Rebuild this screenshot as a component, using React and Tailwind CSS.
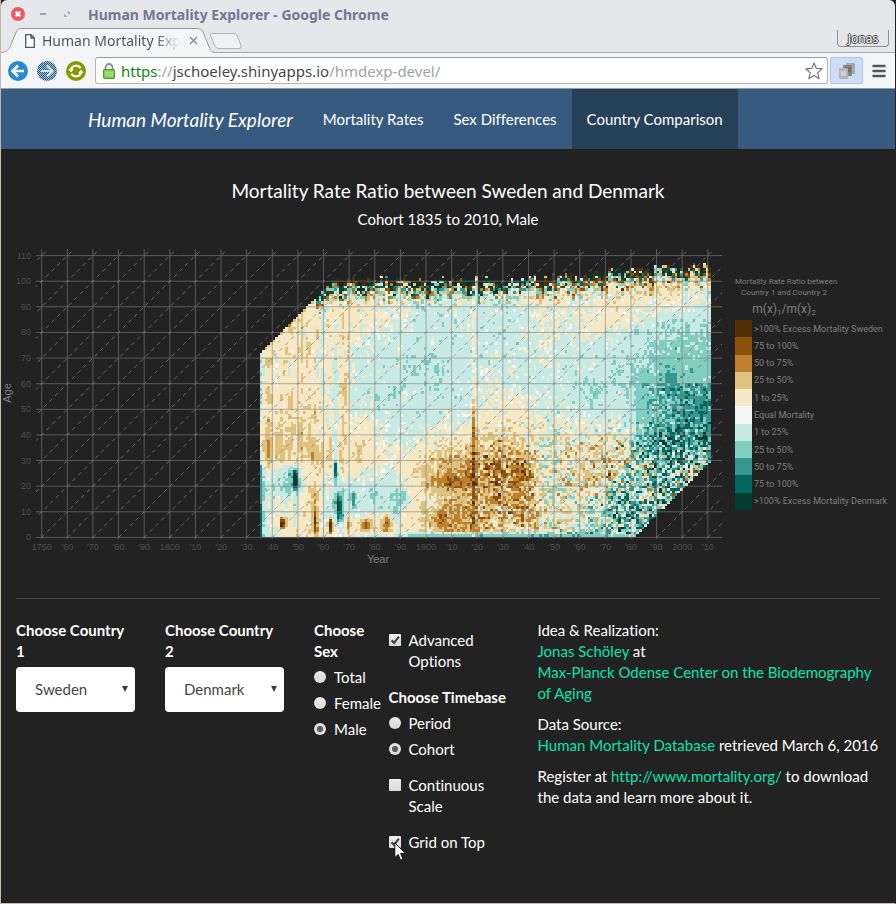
import React from "react";

/* ---------- Mortality ratio surface ---------- */

const CLASS_COLORS = {
  "5": "#543005",
  "4": "#8c510a",
  "3": "#bf812d",
  "2": "#dfc27d",
  "1": "#f6e8c3",
  "0": "#f5f5f5",
  "-1": "#c7eae5",
  "-2": "#80cdc1",
  "-3": "#35978f",
  "-4": "#01665e",
  "-5": "#003c30",
};

// Mean ratio class per decade (columns: 1835, 1845 ... 2005) at each age.
const SURFACE = [
  { age: 0, v: [-1, 0.4, 0.8, 0.2, -0.3, -0.2, -1.2, -1.5, -1.5, -1.5, -1.5, -2.1, -1.7, -1.7, -1.2, -1, -1, -1] },
  { age: 2, v: [-0.6, 0.3, 0.8, 0.4, 0.7, 0.6, 0.3, 1.2, 1.5, 0.6, 0.7, 0.3, 0, -0.6, -1.2, -1, -1, -1] },
  { age: 5, v: [-0.4, 0.5, 0.8, 0.3, 0.8, 0.7, 0.4, 1.9, 2.2, 1.3, 1.3, 0.6, 0.4, -0.6, -1.3, -1.5, -1.5, -1.5] },
  { age: 10, v: [-0.4, 0.3, 0.7, -0.6, -0.5, -0.6, 0.6, 1.7, 2, 1.7, 1.8, 0.8, 1, -0.9, -2, -1.6, -1, -1] },
  { age: 15, v: [-0.3, -0.2, 0.6, -0.5, -0.5, -0.7, 0.3, 1.3, 1.6, 2, 1.9, 0.6, 0.6, 0.2, -1.4, -0.4, -1.8, -1] },
  { age: 20, v: [-0.4, -0.7, 0.5, -0.3, -0.4, -0.5, 0.3, 2, 2.2, 2.2, 2.4, 0.5, 0.6, 0.7, -0.6, -1.6, -2, -1] },
  { age: 25, v: [0.2, -0.3, 0.6, 0.3, 0.2, -0.2, 0.5, 1.9, 2.2, 2.3, 2, 0.5, 0.5, 0.9, 0.3, -1.4, -1.9, -0.5] },
  { age: 30, v: [0.6, 0.7, 0.9, 0.5, 0.6, 0.3, 0.4, 1.6, 1.7, 2.1, 1.9, 0.5, 0.5, 0.9, 0.6, -1.3, -2.1, -1.4] },
  { age: 35, v: [0.5, 0.8, 0.9, 0.5, 0.5, -0.1, 0, 0.6, 0.8, 1.6, 1.2, 0.3, 0.4, 0.8, 0.4, -1.3, -2.1, -2.2] },
  { age: 40, v: [0.5, 0.7, 0.8, 0.3, 0.4, -0.1, -0.2, 0.2, 0.4, 0.9, 0.7, 0.2, 0.2, 0.1, -0.1, -1.2, -2.2, -2.6] },
  { age: 50, v: [0.4, 0.6, 0.7, 0, -0.3, -0.5, -0.5, -0.45, -0.4, 0.1, 0.3, -0.3, -0.3, -0.5, -0.4, -1.2, -1.8, -2.4] },
  { age: 60, v: [0.3, 0.5, 0.6, 0, -0.5, -0.6, -0.55, -0.6, -0.5, -0.2, -0.4, -0.3, -0.5, -0.7, -0.7, -1.3, -1.7, -1.5] },
  { age: 70, v: [0.4, 0.5, 0.5, 0, -0.4, -0.5, -0.6, -0.6, -0.5, -0.4, -0.4, -0.1, -0.4, -0.5, -0.6, -1, -1.6, -1.5] },
  { age: 78, v: [0.4, 0.5, 0.5, 0.3, 0, -0.2, -0.5, -0.55, -0.4, -0.5, -0.4, 0, -0.2, 0, -0.5, -0.7, -1.1, -1.2] },
  { age: 85, v: [0.5, 0.6, 0.5, 0.3, 0.3, 0.2, -0.3, -0.5, -0.3, -0.5, -0.4, 0.1, -0.1, 0.4, 0.5, -0.2, -0.6, -0.6] },
  { age: 92, v: [0.5, 0.5, 0.2, 0.4, 0.3, 0.2, -0.2, -0.3, -0.2, -0.2, -0.2, 0.3, 0.1, 0.1, 0.6, 0.5, 0.4, 0] },
  { age: 110, v: [1, 1, 0.5, 0.5, 0.6, 0.4, 0.2, 0, 0.2, 0, 0, 0.4, 0.3, 0.4, 0.8, 0.7, 0.6, 0.7] },
];

function hash(a, b, c) {
  let h = Math.imul(a + 7919, 0x9e3779b1);
  h ^= h >>> 15;
  h = Math.imul(h + b + 104729, 0x85ebca6b);
  h ^= h >>> 13;
  h = Math.imul(h + c + 1299709, 0xc2b2ae35);
  h ^= h >>> 16;
  h = Math.imul(h, 0x27d4eb2f);
  h ^= h >>> 15;
  return (h >>> 0) / 4294967296;
}

const gauss = (a, b, c) => hash(a, b, c) + hash(a, b, c + 11) + hash(a, b, c + 23) - 1.5;
const clamp = (v, lo, hi) => Math.min(hi, Math.max(lo, v));

function streak(year, age, length, seed) {
  const p = age / length;
  const i = Math.floor(p);
  const t = p - i;
  return gauss(year, i, seed) * (1 - t) + gauss(year, i + 1, seed) * t;
}

function meanClass(year, age) {
  let r = 0;
  while (r < SURFACE.length - 2 && SURFACE[r + 1].age <= age) r += 1;
  const lo = SURFACE[r];
  const hi = SURFACE[r + 1];
  const ta = clamp((age - lo.age) / (hi.age - lo.age), 0, 1);
  const p = clamp((year - 1835) / 10, 0, 17);
  const c = Math.min(16, Math.floor(p));
  const tc = p - c;
  const at = (row) => row.v[c] * (1 - tc) + row.v[c + 1] * tc;
  return at(lo) * (1 - ta) + at(hi) * ta;
}

// Local events: [year, age, half width, half height, strength]
const SPOTS = [
  [1838, 43, 0.8, 3, 1.6], [1838, 32, 0.8, 5, 2], [1838, 55, 1.2, 3, 1],
  [1838, 67, 0.8, 2, 0.9], [1842, 34, 2, 5, 0.6], [1835, 60, 0.6, 12, -0.9],
  [1848.5, 22, 1, 3.4, -4.6], [1848.5, 11, 0.8, 4, -1.4], [1843.5, 5, 0.9, 1.8, 4.6],
  [1847, 22, 4, 5, -0.6], [1835.5, 15, 0.8, 12, -1],
  [1851, 36, 0.7, 7, 0.9], [1851, 70, 0.5, 18, 0.9], [1847, 54, 0.7, 3, 0.9],
  [1847, 40, 0.7, 5, 0.7], [1856, 45, 0.6, 4, 0.7],
  [1846, 83, 0.6, 3, 0.9], [1855, 34, 2, 4, 0.7], [1856, 10, 0.9, 9, 1.8],
  [1856, 5, 0.6, 4, 1.8], [1862, 4, 0.7, 2.6, 4], [1864, 26, 0.8, 2.6, -3],
  [1864, 40, 1, 24, -0.8], [1865.5, 11, 1.2, 5, -2.6], [1866, 8, 2, 7, -0.8],
  [1860, 10, 0.6, 10, -0.9], [1859, 70, 1.1, 22, -0.6],
  [1871, 14, 0.9, 3, -1.5], [1876, 4, 1.8, 2, 2], [1884, 5, 1.2, 3.4, 2.2],
  [1888, 12, 1.2, 6, -1.2], [1891, 15, 1.2, 2.4, -1.5], [1869, 4, 0.6, 3, 1.7],
  [1867, 83, 0.8, 6, 1], [1868, 66, 1.4, 12, 0.9], [1867, 45, 1.3, 16, 0.8],
  [1873, 33, 1.2, 4, 0.9], [1879, 15, 0.7, 2, -1.2],
  [1918, 24, 0.5, 24, 2.2], [1918, 70, 0.9, 28, 0.6], [1905, 21, 5, 2, 0.7],
  [1904, 6, 3, 3, 0.8], [1912, 21, 4, 2.4, 0.7], [1995, 60, 2, 4, -0.8],
  [1938, 23, 2, 4, 0.7], [1927, 28, 4, 3, 0.8], [1902, 12, 1.5, 4, -0.6],
  [1904, 65, 2, 2, -0.6], [1965, 57, 2, 4, -0.4], [1969, 38, 2, 2, 0.8],
];

function topAge(year) {
  if (year < 1863) return year - 1835 + 72;
  const trend = year < 1930 ? 99.5 : 99.5 + (year - 1930) * 0.074;
  return Math.round(trend + (hash(year, 3, 7) - 0.4) * 4);
}

function cellClass(year, age, top) {
  let v = meanClass(year, age);
  for (const [y0, a0, w, h, s] of SPOTS) {
    const dx = (year - y0) / w;
    const dy = (age - a0) / h;
    if (Math.abs(dx) < 3 && Math.abs(dy) < 2) v += s * Math.exp(-0.7 * dx * dx - 0.5 * dy * dy * dy * dy);
  }
  if (year > 1943 && year < 1952 && age < 38 && age > 3) v -= 0.4;
  if (year > 1933 && year <= 1943 && age < 35 && age > 3) v += 0.3;
  if (year > 1981 && age < 60 && age > 28) v -= 0.35;
  const cohort = year - age;
  if (age > 48 && age < 72 && year > 1877 && year < 1906 && cohort > 1828 && cohort < 1834) v -= 0.32;

  const late = clamp((year - 1912) / 10, 0, 1);
  const modern = clamp((year - 1962) / 15, 0, 1);
  const young = clamp((46 - age) / 16, 0, 1);
  const turn = clamp((year - 1893) / 10, 0, 1);
  let fine = 0.3 + 0.45 * young * turn + 0.85 * late * young + 0.9 * modern * young;
  if (year > 1985 && age < 60) fine += 0.6;
  if (year > 1920 && age >= 35) fine += 0.1;
  v += gauss(year, age, 5) * (age === 0 ? 0.4 : fine * 1.25);
  const smooth = year < 1871 ? 0.65 : 0.32;
  v += streak(year, age, year < 1900 ? 6 : 3, 131) * smooth;
  v += streak(year, age + 40, 2, 277) * 0.3;
  if (year === 1835 && age < 28) v = age < 14 ? -3.9 + age * 0.07 : -2.1;

  const fromTop = top - age;
  if (year > 1856 && age > 86) {
    const edge = Math.exp(-fromTop / 3);
    v += gauss(year, age, 491) * 24 * edge;
    if (fromTop < 4 && year < 1940) v -= 2.4;
    if (fromTop < 8 && year > 1940) v += 0.5;
  } else if (year <= 1856 && fromTop < 2) {
    v += 0.5;
  }
  if (Math.abs(v) < 0.04) return 0;
  return clamp(v > 0 ? Math.ceil(v) : Math.floor(v), -5, 5);
}

const X0 = 41.7;
const Y0 = 537;
const STEP = 2.562;

function buildCells() {
  const paths = {};
  for (let year = 1835; year <= 2010; year += 1) {
    const top = topAge(year);
    const bottom = Math.max(0, year - 1981);
    const x = Math.round((X0 + (year - 1750) * STEP) * 100) / 100 + 0.3;
    let start = bottom;
    let current = cellClass(year, bottom, top);
    for (let age = bottom + 1; age <= top; age += 1) {
      const next = age === top ? null : cellClass(year, age, top);
      if (next !== current) {
        const y1 = (Y0 - start * STEP).toFixed(2);
        const h = ((age - start) * STEP).toFixed(2);
        paths[current] = (paths[current] || "") + `M${x.toFixed(2)} ${y1}v-${h}h${STEP}v${h}z`;
        current = next;
        start = age;
      }
    }
  }
  return paths;
}

const CELLS = buildCells();
const DECADES = Array.from({ length: 27 }, (_, i) => 1750 + i * 10);
const AGES = Array.from({ length: 12 }, (_, i) => i * 10);
const DIAGONALS = Array.from({ length: 38 }, (_, i) => 1640 + i * 10);

function Surface() {
  const px = (year) => X0 + (year - 1750) * STEP;
  const py = (age) => 537.4 - age * STEP;
  return (
    <svg
      viewBox="1 240 730 330"
      className="block min-w-0 flex-1 font-['Liberation_Sans',Arial,sans-serif]"
      role="img"
      aria-label="Mortality rate ratio by year and age"
    >
      <defs>
        <clipPath id="panel">
          <rect x="36" y="249" width="686" height="290" />
        </clipPath>
      </defs>
      <g shapeRendering="crispEdges">
        {Object.keys(CELLS).map((k) => (
          <path key={k} d={CELLS[k]} fill={CLASS_COLORS[k]} />
        ))}
      </g>
      <g stroke="#7f7f7f" strokeOpacity="0.6" fill="none">
        {AGES.map((a) => (
          <path key={a} d={`M36 ${py(a)}H722`} />
        ))}
        {DECADES.map((d) => (
          <path key={d} d={`M${px(d)} 249V539`} />
        ))}
        <g clipPath="url(#panel)" strokeDasharray="4 4" strokeWidth="1" strokeOpacity="0.75">
          {DIAGONALS.map((d) => (
            <path key={d} d={`M${px(d)} ${py(0)}L${px(d + 120)} ${py(120)}`} />
          ))}
        </g>
      </g>
      <g fill="#4f4f4f" fontSize="9" textAnchor="end">
        {AGES.map((a) => (
          <text key={a} x="31" y={py(a) + 3}>{a}</text>
        ))}
      </g>
      <g fill="#4f4f4f" fontSize="9" textAnchor="middle">
        {DECADES.map((d) => (
          <text key={d} x={px(d)} y="550">
            {d === 1750 || d % 100 === 0 ? d : `'${d % 100}`}
          </text>
        ))}
      </g>
      <g fill="#7f7f7f" fontSize="11" textAnchor="middle">
        <text x="378" y="563">Year</text>
        <text transform="translate(11 393) rotate(-90)">Age</text>
      </g>
    </svg>
  );
}

const LEGEND = [
  [">100% Excess Mortality Sweden", "bg-[#543005]"],
  ["75 to 100%", "bg-[#8c510a]"],
  ["50 to 75%", "bg-[#bf812d]"],
  ["25 to 50%", "bg-[#dfc27d]"],
  ["1 to 25%", "bg-[#f6e8c3]"],
  ["Equal Mortality", "bg-[#f5f5f5]"],
  ["1 to 25%", "bg-[#c7eae5]"],
  ["25 to 50%", "bg-[#80cdc1]"],
  ["50 to 75%", "bg-[#35978f]"],
  ["75 to 100%", "bg-[#01665e]"],
  [">100% Excess Mortality Denmark", "bg-[#003c30]"],
];

function Legend() {
  return (
    <aside className="w-[164px] shrink-0 pl-1 pt-[36px] font-[Roboto,Arial,sans-serif] text-[#7f7f7f]">
      <div className="w-[98px] text-center">
        <p className="whitespace-nowrap text-[8px] leading-[11px]">
          Mortality Rate Ratio between
          <br />
          Country 1 and Country 2
        </p>
        <p className="py-[3px] text-[12px] leading-4">
          m(x)<sub className="text-[8px]">1</sub>/m(x)<sub className="text-[8px]">2</sub>
        </p>
      </div>
      <ul className="grid h-[190px] grid-rows-11">
        {LEGEND.map(([label, color], i) => (
          <li key={i} className="flex items-stretch gap-[2px]">
            <span className={`w-[17px] shrink-0 ${color}`} />
            <span className="self-center whitespace-nowrap text-[9px] leading-3">{label}</span>
          </li>
        ))}
      </ul>
    </aside>
  );
}

/* ---------- Browser window ---------- */

function TitleBar() {
  return (
    <div className="flex h-7 items-center pl-[10px]">
      <button aria-label="Close" className="mr-[15px]">
        <svg width="14" height="14" viewBox="0 0 14 14" className="block">
          <circle cx="7" cy="7" r="7" fill="#f0595f" />
          <path d="M4.6 4.6l4.8 4.8M9.4 4.6l-4.8 4.8" stroke="#fff" strokeWidth="2.2" />
        </svg>
      </button>
      <button aria-label="Minimize" className="mr-[16px]">
        <svg width="7" height="8" viewBox="0 0 7 8" className="block">
          <path d="M0 4h6" stroke="#8e92a3" strokeWidth="1.6" />
        </svg>
      </button>
      <button aria-label="Maximize" className="mr-[17px]">
        <svg width="8" height="8" viewBox="0 0 8 8" className="block">
          <path d="M3.500 1.500H7V5zM1 3.500V7h3.500z" fill="#a6a9b6" />
        </svg>
      </button>
      <h1 className="whitespace-nowrap text-[14px] font-bold text-[#73788f]">
        Human Mortality Explorer - Google Chrome
      </h1>
    </div>
  );
}

function TabStrip() {
  return (
    <div className="flex h-[25px] border-b border-[#a5a6ab]">
      <div className="relative h-[25px] w-[214px] shrink-0">
        <svg className="absolute inset-0" width="214" height="25" viewBox="0 0 214 25">
          <path
            d="M0 24.5C5 24 7 23 9 19L15 4.500C16.500 1 18 .5 21 .5H195C199 .5 201 1.500 202.500 5L208 19C210 23 211 24.500 214 24.500V26H0z"
            fill="#f4f5f7"
            stroke="#98999e"
          />
        </svg>
        <div className="relative flex h-full items-center pl-6">
          <svg width="10" height="14" viewBox="0 0 10 14" className="mr-[7px] shrink-0">
            <path d="M.7.7H6L9.300 4V13.300H.7zM6 .7V4H9.300" fill="#fff" stroke="#55565a" strokeWidth="1.300" />
          </svg>
          <span className="w-[138px] overflow-hidden whitespace-nowrap bg-linear-to-r from-[#4e5158] from-82% to-[#4e515800] bg-clip-text text-[14px] leading-5 text-transparent">
            Human Mortality Explorer
          </span>
          <button aria-label="Close tab" className="ml-[9px]">
            <svg width="9" height="9" viewBox="0 0 9 9" className="block">
              <path d="M1 1l7 7M8 1L1 8" stroke="#8f9197" strokeWidth="1.500" />
            </svg>
          </button>
        </div>
      </div>
      <button aria-label="New tab" className="mt-[5px] h-4 w-[34px] shrink-0">
        <svg width="34" height="16" viewBox="0 0 34 16" className="-ml-[6px] block overflow-visible">
          <path d="M3 .5H25Q27.500.5 28.500 3L32 12.500Q33 15.500 30 15.500H10Q7 15.500 6 13L1.500 3Q.8.5 3 .5z" fill="#f0f1f4" stroke="#b2b3b8" />
        </svg>
      </button>
      <button className="ml-auto mr-[6px] mt-[2px] h-[17px] w-[52px] rounded-b-[4px] border border-t-0 border-[#8f9095] text-[12px] leading-[17px] text-white [text-shadow:1px_0_#444,-1px_0_#444,0_1px_#444,0_-1px_#444]">
        Jonas
      </button>
    </div>
  );
}

function Toolbar() {
  return (
    <div className="flex h-9 items-center border-b border-[#9a9ba0] bg-[#f4f5f7] pl-[7px] pr-[9px]">
      <button aria-label="Back" className="mr-[9px]">
        <svg width="20" height="20" viewBox="0 0 20 20" className="block">
          <circle cx="10" cy="10" r="10" fill="#268bd2" />
          <path d="M16 10H5M10 4.500L4.500 10l5.500 5.500" fill="none" stroke="#fff" strokeWidth="2.600" />
        </svg>
      </button>
      <button aria-label="Forward" className="mr-[9px]">
        <svg width="20" height="20" viewBox="0 0 20 20" className="block">
          <defs>
            <pattern id="checker" width="2" height="2" patternUnits="userSpaceOnUse">
              <path d="M0 0h1v1H0zM1 1h1v1H1z" fill="#1f5a8c" shapeRendering="crispEdges" />
            </pattern>
          </defs>
          <circle cx="10" cy="10" r="10" fill="#a9c0d3" />
          <circle cx="10" cy="10" r="10" fill="url(#checker)" />
          <path d="M4 10h11M10 4.500l5.500 5.500-5.500 5.500" fill="none" stroke="#dbe6ef" strokeWidth="2.200" />
        </svg>
      </button>
      <button aria-label="Reload" className="mr-[9px]">
        <svg width="20" height="20" viewBox="0 0 20 20" className="block">
          <circle cx="10" cy="10" r="10" fill="#859900" />
          <path d="M5 8.200A5.400 5.400 0 0 1 14.600 7.200M15 11.800A5.400 5.400 0 0 1 5.400 12.800" fill="none" stroke="#fff" strokeWidth="2.200" />
          <path d="M2.400 8h5.400L5 11.600zM17.600 12h-5.400L15 8.400z" fill="#fff" />
        </svg>
      </button>
      <div className="flex h-[27px] min-w-0 flex-1 items-center rounded-[3px] border border-[#b4b5ba] border-t-[#98999e] bg-white pl-[7px] pr-1">
        <svg width="12" height="16" viewBox="0 0 12 16" className="mr-[6px] shrink-0">
          <path d="M2.500 8V4.500a3.500 3.500 0 0 1 7 0V8" fill="none" stroke="#8a8a8a" strokeWidth="1.800" />
          <rect x=".6" y="6.600" width="10.800" height="8.800" rx="1" fill="#8fd45f" stroke="#4f9a2c" strokeWidth="1.200" />
          <path d="M2 9.500h8M2 12h8" stroke="#a9e380" />
        </svg>
        <span className="whitespace-nowrap text-[15px] leading-6 text-[#a0a2a6]">
          <span className="text-[#0a8a0a]">https</span>://<span className="text-[#45474d]">jschoeley.shinyapps.io</span>/hmdexp-devel/
        </span>
        <button aria-label="Bookmark" className="ml-auto">
          <svg width="18" height="18" viewBox="0 0 18 18" className="block">
            <path d="M9 .9l2.300 5.500 5.900.5-4.500 3.900 1.400 5.900L9 13.600l-5.100 3.100 1.400-5.900L.8 6.900l5.900-.5z" fill="#fff" stroke="#77787c" strokeWidth="1.200" strokeLinejoin="round" />
          </svg>
        </button>
      </div>
      <button aria-label="Extension" className="ml-[2px] flex h-[27px] w-[33px] items-center justify-center rounded-[2px] border border-[#a9c4f5] bg-[#cddcf8]">
        <svg width="18" height="18" viewBox="0 0 18 18">
          <rect x="8" y="1" width="9" height="11" rx="1" fill="#a8a8a8" />
          <rect x="5" y="3" width="9" height="11" rx="1" fill="#858585" />
          <rect x="8" y="5" width="5" height="5" fill="#6f6f6f" />
          <rect x="1" y="6" width="9" height="11" rx="1" fill="#b4b4b4" />
          <rect x="3" y="9" width="5" height="5" fill="#d2d2d2" />
        </svg>
      </button>
      <button aria-label="Menu" className="ml-[9px]">
        <svg width="14" height="14" viewBox="0 0 14 14" className="block">
          <path d="M1.500 2h11M1.500 7h11M1.500 12h11" stroke="#55565a" strokeWidth="2.600" strokeLinecap="round" />
        </svg>
      </button>
    </div>
  );
}

/* ---------- Page ---------- */

function NavLink({ active, children }) {
  return (
    <a
      href="#"
      aria-current={active ? "page" : undefined}
      className={`flex items-center whitespace-nowrap px-[15px] text-[15px] ${active ? "bg-[#28415b]" : ""}`}
    >
      {children}
    </a>
  );
}

function CountrySelect({ id, label, options }) {
  return (
    <div className="col-span-2 px-[15px]">
      <label htmlFor={id} className="mb-[5px] block font-bold">{label}</label>
      <div className="relative">
        <select id={id} className="h-[45px] w-full appearance-none rounded-[4px] bg-white pl-[19px] pr-6 text-[15px] text-[#464545]">
          {options.map((o) => (
            <option key={o}>{o}</option>
          ))}
        </select>
        <svg className="pointer-events-none absolute right-[7px] top-[19px]" width="6" height="6" viewBox="0 0 6 6">
          <path d="M0 0h6L3 6z" fill="#3a3a3a" />
        </svg>
      </div>
    </div>
  );
}

function Radio({ name, label, checked }) {
  return (
    <label className="mt-[5px] flex items-start gap-2">
      <input
        type="radio"
        name={name}
        defaultChecked={checked}
        className="mt-1 size-3 shrink-0 appearance-none rounded-full bg-linear-to-b from-[#ececec] to-[#d8d8d8] checked:bg-radial checked:from-[#5c5c5c] checked:from-32% checked:to-[#e0e0e0] checked:to-42%"
      />
      {label}
    </label>
  );
}

function Check({ label, checked }) {
  return (
    <label className="flex items-start gap-2">
      <span className="relative mt-1 block size-3 shrink-0">
        <input
          type="checkbox"
          defaultChecked={checked}
          className="peer block size-3 appearance-none rounded-[1px] bg-linear-to-b from-[#ececec] to-[#dadada]"
        />
        <svg className="pointer-events-none absolute inset-0 hidden peer-checked:block" width="12" height="12" viewBox="0 0 12 12">
          <path d="M2.500 6.200l2.600 2.600 4.800-6.200" fill="none" stroke="#444" strokeWidth="2.200" />
        </svg>
      </span>
      <span>{label}</span>
    </label>
  );
}

function Pointer() {
  return (
    <svg className="pointer-events-none absolute left-[5px] top-[10px]" width="13" height="20" viewBox="0 0 13 20">
      <path d="M.8.8V15.500L4.200 12.400 6.600 18.200 9 17.200 6.600 11.500H11.400z" fill="#fff" stroke="#111" />
    </svg>
  );
}

function Link({ children }) {
  return <a href="#" className="text-[#0ce3ac]">{children}</a>;
}

export default function App() {
  return (
    <div className="flex min-h-screen flex-col border border-t-0 border-[#c3b9aa] border-r-[#20242a] bg-[#222]">
      <header className="rounded-t-md bg-[#e6e7eb] font-['Noto_Sans','Open_Sans',sans-serif]">
        <TitleBar />
        <TabStrip />
        <Toolbar />
      </header>

      <div className="flex-1 font-[Lato,sans-serif] text-[15px] leading-[21px] text-white [font-variant-ligatures:none]">
        <nav className="flex h-[60px] bg-[#375a7f] pl-[72px]">
          <a href="#" className="flex items-center whitespace-nowrap px-[15px] text-[19px] italic">
            Human Mortality Explorer
          </a>
          <NavLink>Mortality Rates</NavLink>
          <NavLink>Sex Differences</NavLink>
          <NavLink active>Country Comparison</NavLink>
        </nav>

        <main>
          <div className="pt-7 text-center">
            <h2 className="text-[19px] leading-7">Mortality Rate Ratio between Sweden and Denmark</h2>
            <p className="mt-1">Cohort 1835 to 2010, Male</p>
          </div>
          <div className="mt-[10px] flex items-start">
            <Surface />
            <Legend />
          </div>
          <hr className="mx-[15px] mb-[21px] mt-7 border-[#464545]" />

          <form className="grid grid-cols-12">
            <CountrySelect id="country1" label="Choose Country 1" options={["Sweden", "Denmark"]} />
            <CountrySelect id="country2" label="Choose Country 2" options={["Denmark", "Sweden"]} />
            <fieldset className="col-span-1 min-w-0 px-[15px]">
              <legend className="font-bold">Choose Sex</legend>
              <Radio name="sex" label="Total" />
              <Radio name="sex" label="Female" />
              <Radio name="sex" label="Male" checked />
            </fieldset>
            <div className="col-span-2 flex flex-col gap-[15px] px-[15px] pt-[10px]">
              <Check label="Advanced Options" checked />
              <fieldset>
                <legend className="whitespace-nowrap font-bold">Choose Timebase</legend>
                <Radio name="timebase" label="Period" />
                <Radio name="timebase" label="Cohort" checked />
              </fieldset>
              <Check label="Continuous Scale" />
              <div className="relative">
                <Check label="Grid on Top" checked />
                <Pointer />
              </div>
            </div>
            <div className="col-span-5 flex flex-col gap-[10px] px-[15px]">
              <p>
                Idea &amp; Realization:
                <br />
                <Link>Jonas Schöley</Link> at
                <br />
                <Link>Max-Planck Odense Center on the Biodemography of Aging</Link>
              </p>
              <p>
                Data Source:
                <br />
                <Link>Human Mortality Database</Link> retrieved March 6, 2016
              </p>
              <p>
                Register at <Link>http://www.mortality.org/</Link> to download the data and learn more about it.
              </p>
            </div>
          </form>
        </main>
      </div>
    </div>
  );
}
